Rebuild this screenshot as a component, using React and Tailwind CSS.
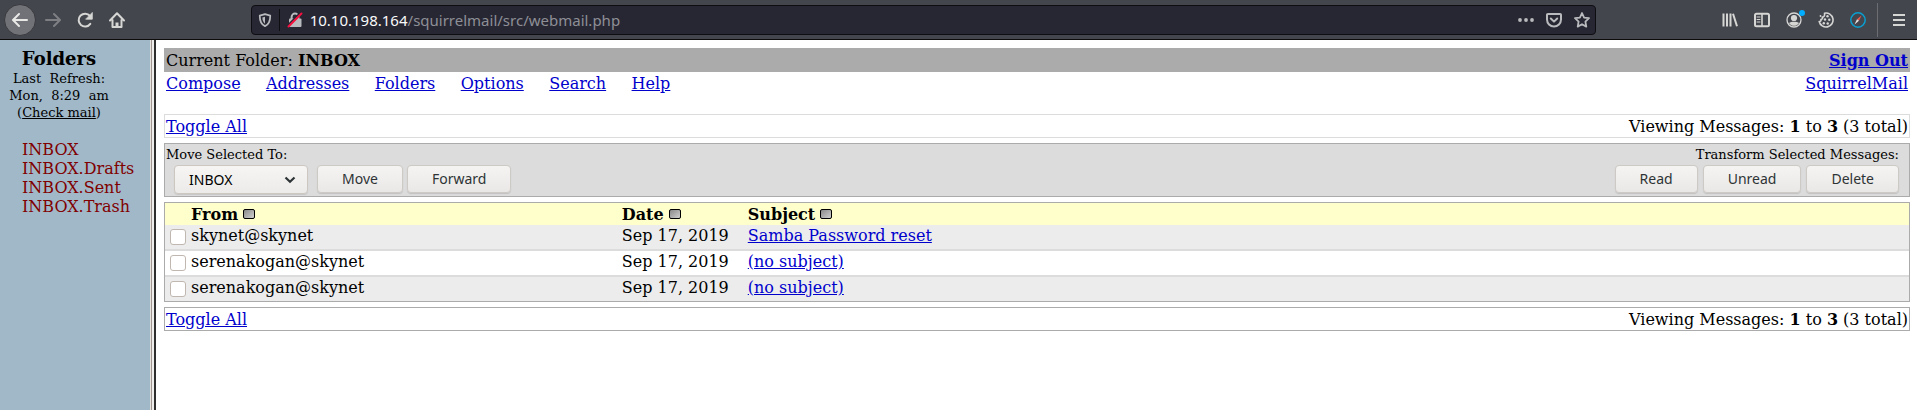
import React from "react";

const MENU = ["Compose", "Addresses", "Folders", "Options", "Search", "Help"];
const FOLDERS = ["INBOX", "INBOX.Drafts", "INBOX.Sent", "INBOX.Trash"];
const MESSAGES = [
  { id: 1, from: "skynet@skynet", date: "Sep 17, 2019", subject: "Samba Password reset" },
  { id: 2, from: "serenakogan@skynet", date: "Sep 17, 2019", subject: "(no subject)" },
  { id: 3, from: "serenakogan@skynet", date: "Sep 17, 2019", subject: "(no subject)" },
];

function Icon({ children, className = "size-4" }) {
  return (
    <svg viewBox="0 0 16 16" className={className} fill="none" stroke="currentColor" strokeWidth="2" strokeLinecap="round" strokeLinejoin="round" aria-hidden="true">
      {children}
    </svg>
  );
}

function ToolButton({ label, className = "", children }) {
  return (
    <button type="button" aria-label={label} className={`flex h-8 w-8 shrink-0 items-center justify-center ${className}`}>
      {children}
    </button>
  );
}

function BrowserBar() {
  return (
    <header className="flex h-10 items-center border-b border-[#0c0c0d] bg-[#43464d] pl-1 pr-0.5 text-[#d6d6d4]">
      <ToolButton label="Back" className="mr-px rounded-full border border-[#38393f] bg-[#717277] text-[#e8e8e6]">
        <Icon><path d="M15 8H1.500M7 2 1 8l6 6" /></Icon>
      </ToolButton>
      <ToolButton label="Forward" className="text-[#7d7f83]">
        <Icon><path d="M1 8h13.500M9 2l6 6-6 6" /></Icon>
      </ToolButton>
      <ToolButton label="Reload">
        <Icon>
          <path d="M13.300 11.800A6.400 6.400 0 1 1 13 4" />
          <path d="M15.300.8v6.400H9z" fill="currentColor" strokeWidth="0.800" />
        </Icon>
      </ToolButton>
      <ToolButton label="Home">
        <Icon>
          <path d="M1 8.500 8 1.300l7 7.200M3.500 8v7h9V8" />
          <path d="M8 15v-4.500" strokeWidth="3" strokeLinecap="butt" />
        </Icon>
      </ToolButton>
      <div className="flex-[3]" />
      <div className="flex h-[30px] flex-[34] items-center rounded border border-[#0e0e12] bg-[#272733] px-[5px] text-[#b9babd]">
        <button type="button" aria-label="Tracking protection" className="px-px">
          <Icon className="size-3.5">
            <path d="M8 1.200 14 3c0 6-1.600 10-6 12C3.600 13 2 9 2 3z" />
            <path d="M8 4.200v8C6 10.500 5 8 5 5z" fill="currentColor" stroke="none" />
          </Icon>
        </button>
        <span className="ml-1.5 h-[22px] w-px bg-[#0e0e12]" />
        <button type="button" aria-label="Connection is not secure" className="ml-[7px]">
          <Icon>
            <path d="M4.600 7V5a3.400 3.400 0 0 1 6.800 0v2" />
            <rect x="2" y="6.500" width="12.500" height="8.500" rx="1" fill="currentColor" stroke="none" />
            <path d="M.8 13.500 13 1.300" stroke="#272733" strokeWidth="2" />
            <path d="M1.500 14.500 14.500 1.500" stroke="#f5103f" />
          </Icon>
        </button>
        <a href="#url" className="ml-[7px] flex-1 font-['Noto_Sans',sans-serif] text-[15px] leading-5 text-[#8e8f96]">
          <span className="text-[#f9f9fa]">10.10.198.164</span>/squirrelmail/src/webmail.php
        </a>
        <div className="flex items-center gap-3">
          <button type="button" aria-label="Page actions">
            <Icon>
              <g fill="currentColor" stroke="none">
                <circle cx="2" cy="8" r="1.900" /><circle cx="8" cy="8" r="1.900" /><circle cx="14" cy="8" r="1.900" />
              </g>
            </Icon>
          </button>
          <button type="button" aria-label="Save to Pocket">
            <Icon>
              <path d="M1.800 2h12.400a.8.8 0 0 1 .8.8V7.500a7 7 0 0 1-14 0V2.800a.8.8 0 0 1 .8-.8z" />
              <path d="M4.800 6.500 8 9.600l3.200-3.100" />
            </Icon>
          </button>
          <button type="button" aria-label="Bookmark this page">
            <Icon>
              <path d="m8 1 2.100 4.600 4.900.6-3.600 3.400.9 5L8 12.200l-4.300 2.400.9-5L1 6.200l4.900-.6z" strokeWidth="1.800" />
            </Icon>
          </button>
        </div>
      </div>
      <div className="flex-[3]" />
      <ToolButton label="Library">
        <Icon><path d="M1.500 1.500v13M5 1.500v13M8.500 1.500v13M11 1.700l4 12.600" strokeLinecap="butt" /></Icon>
      </ToolButton>
      <ToolButton label="Sidebars">
        <Icon>
          <rect x="1" y="1.800" width="14" height="12.400" rx="1.500" />
          <path d="M8 2v12" strokeWidth="1.600" />
          <path d="M3 5h3M3 7.500h3M3 10h3" strokeWidth="1" />
        </Icon>
      </ToolButton>
      <ToolButton label="Account" className="relative">
        <Icon>
          <circle cx="8" cy="8" r="7" strokeWidth="1.300" />
          <circle cx="8" cy="6" r="3.100" fill="currentColor" stroke="none" />
          <path d="M3 11C5 9.300 11 9.300 13 11 11.800 13 9.800 13.800 8 13.800S4.200 13 3 11z" fill="currentColor" stroke="none" />
        </Icon>
        <span className="absolute right-[5px] top-1.5 size-1.5 rounded-full bg-[#00adff]" />
      </ToolButton>
      <ToolButton label="Cookies">
        <Icon>
          <path d="M6.500 1.200A7 7 0 1 1 1.200 9.500c1.400.1 2-.7 1.700-2 1.500-.3 1.900-1.200 1.400-2.400C5.900 5.200 7 3.500 6.500 1.200z" strokeWidth="1.600" />
          <g fill="currentColor" stroke="none">
            <circle cx="9.500" cy="4.200" r="1.200" /><circle cx="7" cy="7.500" r="1.200" /><circle cx="11.300" cy="7.700" r="1.200" />
            <circle cx="5.800" cy="11.300" r="1.200" /><circle cx="9.700" cy="11.500" r="1.200" /><circle cx="2.500" cy="4" r="0.900" />
          </g>
        </Icon>
      </ToolButton>
      <ToolButton label="Navigator">
        <Icon>
          <circle cx="8" cy="8" r="7.200" stroke="#0a9fd0" strokeWidth="1.500" />
          <path d="M11.500 3.500 9 8.800 7 7.200z" fill="#f2594b" stroke="none" />
          <path d="M4.500 12.500 7 7.200l2 1.600z" fill="#e4e4e2" stroke="none" />
        </Icon>
      </ToolButton>
      <span className="ml-[3px] h-[34px] w-px bg-[#6b6d73]" />
      <ToolButton label="Menu" className="ml-[5px]">
        <Icon><path d="M2 3h12M2 8h12M2 13h12" strokeLinecap="butt" /></Icon>
      </ToolButton>
    </header>
  );
}

function TextLink({ children, className = "text-[#0000cc]" }) {
  return <a href="#mail" className={`underline ${className}`}>{children}</a>;
}

function GtkButton({ children }) {
  return (
    <button type="button" className="h-7 rounded border border-[#cdc9c5] bg-linear-to-b from-[#f5f4f3] to-[#eae8e6] px-6 font-['Noto_Sans',sans-serif] text-[14px] leading-5 text-[#2e3436] shadow-[0_1px_1px_rgba(0,0,0,0.12)]">
      {children}
    </button>
  );
}

function Pager({ className }) {
  return (
    <div className={`flex justify-between border px-px pb-px pt-0.5 ${className}`}>
      <TextLink>Toggle All</TextLink>
      <span>Viewing Messages: <b>1</b> to <b>3</b> (3 total)</span>
    </div>
  );
}

function SortHeader({ children }) {
  return (
    <th scope="col" className="h-[22px] p-0 text-left align-middle font-bold">
      <span className="flex items-center gap-[5px]">
        {children}
        <button type="button" aria-label={`Sort by ${children}`} className="h-2.5 w-3 rounded-xs border border-black bg-linear-to-br from-[#8a8a8a] to-[#d0d0d0]" />
      </span>
    </th>
  );
}

function Sidebar() {
  return (
    <aside className="w-[150px] shrink-0 bg-[#a0b8c8] pt-2">
      <div className="w-[118px] text-center text-[13px] leading-[17px]">
        <h2 className="text-[18px] font-bold leading-[22px]">Folders</h2>
        <p className="whitespace-pre">{"Last\u00a0 Refresh:\nMon,\u00a0 8:29\u00a0 am"}</p>
        <p>(<TextLink className="text-black">Check mail</TextLink>)</p>
      </div>
      <ul className="mt-[19px] pl-[22px]">
        {FOLDERS.map((name) => (
          <li key={name}><a href="#folder" className="text-[#800000]">{name}</a></li>
        ))}
      </ul>
    </aside>
  );
}

export default function App() {
  return (
    <div className="flex min-h-screen flex-col bg-white font-['DejaVu_Serif',serif] text-[16px] leading-[19px] text-black">
      <BrowserBar />
      <div className="flex flex-1">
        <Sidebar />
        <div className="w-1.5 shrink-0 border-l border-r-2 border-l-[#e6e2de] border-r-[#2e2e2e] bg-[#f0eeec]">
          <div className="h-full w-px bg-[#a09590]" />
        </div>
        <main className="min-w-0 flex-1 pl-2 pr-[7px] pt-2">
          <div className="flex justify-between bg-[#ababab] px-0.5 pb-0.5 pt-[3px]">
            <span>Current Folder: <b>INBOX</b></span>
            <b><TextLink>Sign Out</TextLink></b>
          </div>
          <div className="flex justify-between px-0.5 pt-0.5">
            <nav className="whitespace-pre">
              {MENU.map((item, i) => (
                <React.Fragment key={item}>
                  {i > 0 && "     "}
                  <TextLink>{item}</TextLink>
                </React.Fragment>
              ))}
            </nav>
            <TextLink>SquirrelMail</TextLink>
          </div>

          <Pager className="mt-[21px] border-[#dcdcdc]" />

          <div className="mt-[5px] flex justify-between border border-[#ababab] bg-[#dcdcdc] pb-0.5 pl-px pr-2.5 pt-0.5 text-[13px] leading-[17px]">
            <div>
              <label htmlFor="target" className="block">Move Selected To:</label>
              <div className="mt-0.5 flex items-start pl-2">
                <div className="relative mr-[9px]">
                  <select id="target" className="block h-[29px] w-[134px] appearance-none rounded border border-[#cdc7c2] bg-linear-to-b from-[#f6f5f4] to-[#edebe9] px-3.5 font-['Noto_Sans',sans-serif] text-[14px] leading-5 text-black shadow-[0_1px_1px_rgba(0,0,0,0.1)]">
                    {FOLDERS.map((name) => <option key={name}>{name}</option>)}
                  </select>
                  <svg viewBox="0 0 12 8" className="pointer-events-none absolute right-3 top-[11px] h-2 w-3" fill="none" stroke="#2e3436" strokeWidth="2.200" aria-hidden="true">
                    <path d="M1.500 1.500 6 5.800l4.500-4.300" />
                  </svg>
                </div>
                <div className="flex gap-1">
                  <GtkButton>Move</GtkButton>
                  <GtkButton>Forward</GtkButton>
                </div>
              </div>
            </div>
            <div className="text-right">
              <p>Transform Selected Messages:</p>
              <div className="mt-0.5 flex justify-end gap-[5px]">
                <GtkButton>Read</GtkButton>
                <GtkButton>Unread</GtkButton>
                <GtkButton>Delete</GtkButton>
              </div>
            </div>
          </div>

          <div className="mt-[5px] border border-[#ababab]">
            <table className="w-full table-fixed border-collapse">
              <colgroup>
                <col className="w-[26px]" />
                <col className="w-[24.7%]" />
                <col className="w-[126px]" />
                <col />
              </colgroup>
              <thead className="bg-[#ffffcc]">
                <tr>
                  <td className="p-0" />
                  <SortHeader>From</SortHeader>
                  <SortHeader>Date</SortHeader>
                  <SortHeader>Subject</SortHeader>
                </tr>
              </thead>
              <tbody>
                {MESSAGES.map((m, i) => (
                  <React.Fragment key={m.id}>
                    {i > 0 && <tr className="h-0.5 bg-[#dcdcdc]"><td colSpan={4} className="p-0" /></tr>}
                    <tr className="h-6 bg-[#ececec] nth-[4n+3]:bg-white">
                      <td className="py-0 pl-[5px] pr-0 align-middle">
                        <input type="checkbox" aria-label={`Select message from ${m.from}`} className="block size-4 appearance-none rounded-[3px] border border-[#c0b8b0] bg-white" />
                      </td>
                      <td className="p-0 pt-px align-top">{m.from}</td>
                      <td className="p-0 pt-px align-top">{m.date}</td>
                      <td className="p-0 pt-px align-top"><TextLink>{m.subject}</TextLink></td>
                    </tr>
                  </React.Fragment>
                ))}
              </tbody>
            </table>
          </div>

          <Pager className="mt-[5px] border-[#ababab]" />
        </main>
      </div>
    </div>
  );
}
